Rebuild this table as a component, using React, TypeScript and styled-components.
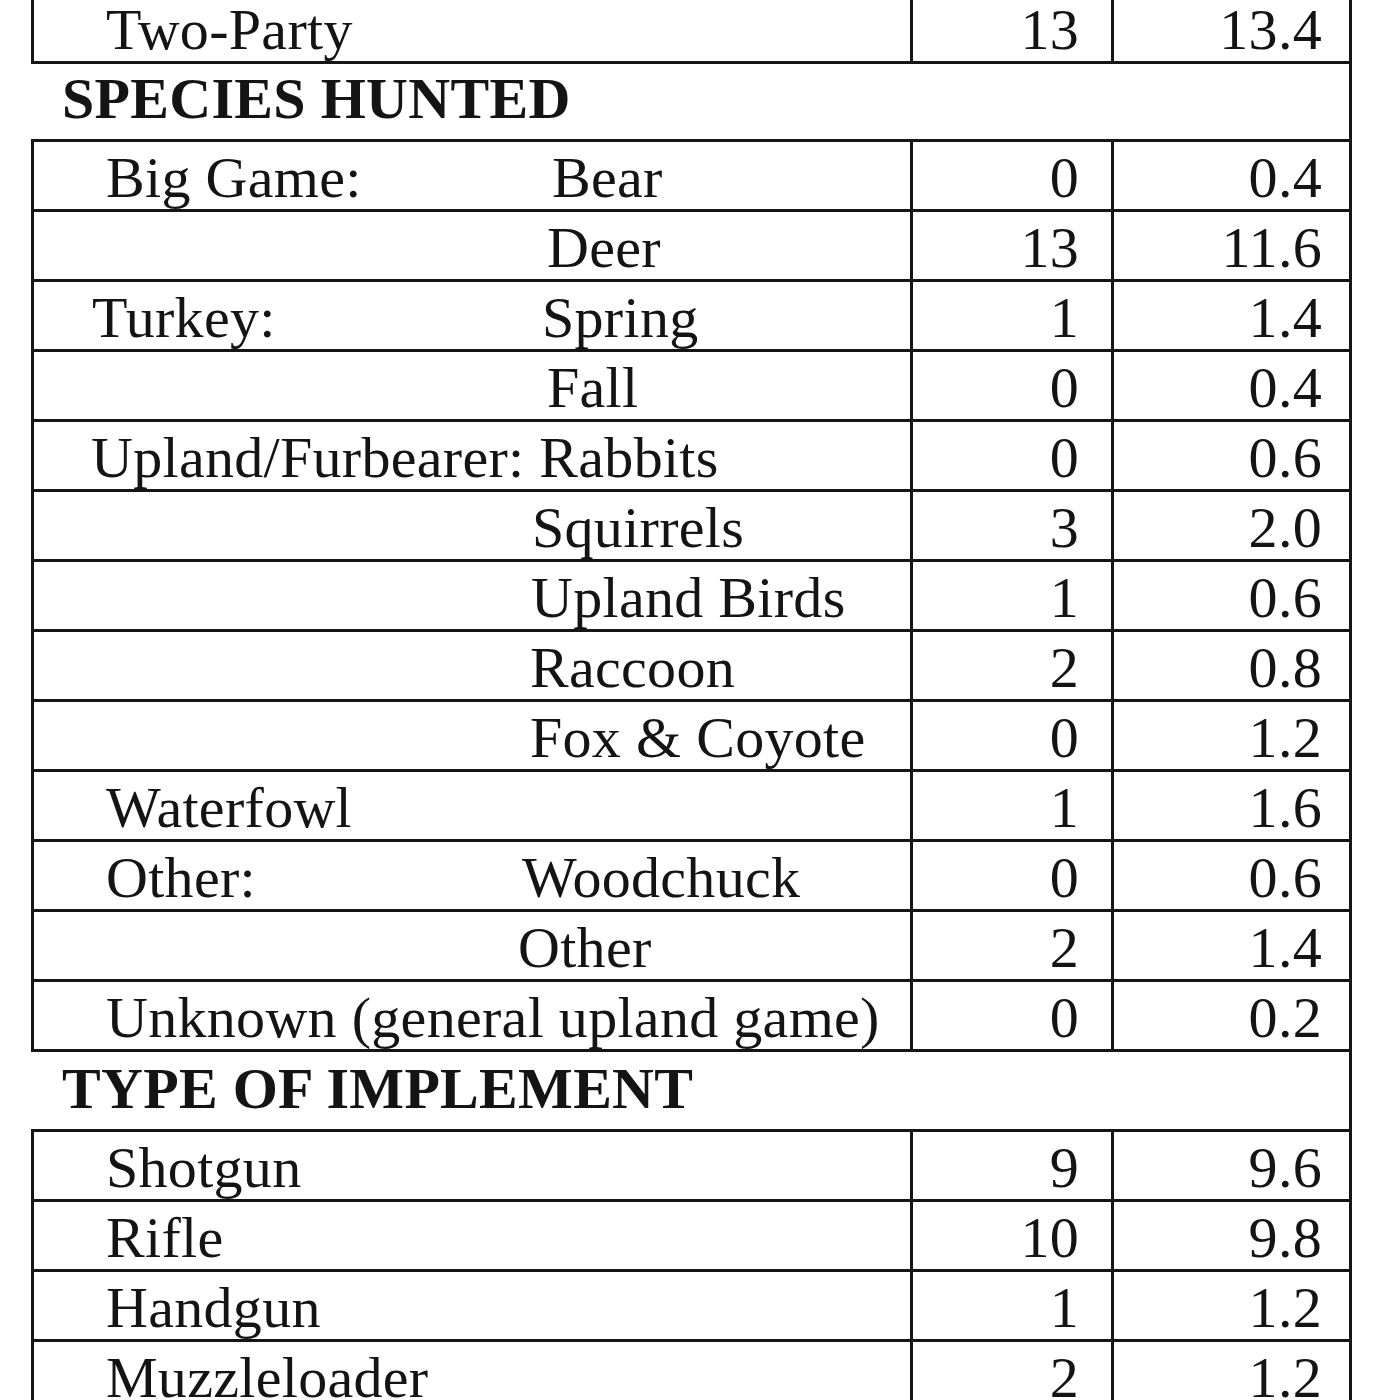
import styled, { createGlobalStyle } from 'styled-components'

const GlobalStyle = createGlobalStyle`
  html, body {
    margin: 0;
    padding: 0;
    background: #ffffff;
  }
  body {
    font-family: "Liberation Serif", "Times New Roman", serif;
    color: #141414;
    overflow: hidden;
  }
`

type Entry = {
  label?: string
  indent?: number
  sub?: string
  subAt?: number
  count: string
  avg: string
}

type Section = {
  title?: string
  rows: Entry[]
}

const sections: Section[] = [
  {
    rows: [{ label: 'Two-Party', count: '13', avg: '13.4' }],
  },
  {
    title: 'SPECIES HUNTED',
    rows: [
      { label: 'Big Game:', sub: 'Bear', subAt: 518, count: '0', avg: '0.4' },
      { sub: 'Deer', subAt: 513, count: '13', avg: '11.6' },
      { label: 'Turkey:', indent: 58, sub: 'Spring', subAt: 508, count: '1', avg: '1.4' },
      { sub: 'Fall', subAt: 513, count: '0', avg: '0.4' },
      { label: 'Upland/Furbearer: Rabbits', indent: 57, count: '0', avg: '0.6' },
      { sub: 'Squirrels', subAt: 498, count: '3', avg: '2.0' },
      { sub: 'Upland Birds', subAt: 497, count: '1', avg: '0.6' },
      { sub: 'Raccoon', subAt: 496, count: '2', avg: '0.8' },
      { sub: 'Fox & Coyote', subAt: 496, count: '0', avg: '1.2' },
      { label: 'Waterfowl', count: '1', avg: '1.6' },
      { label: 'Other:', sub: 'Woodchuck', subAt: 488, count: '0', avg: '0.6' },
      { sub: 'Other', subAt: 484, count: '2', avg: '1.4' },
      { label: 'Unknown (general upland game)', count: '0', avg: '0.2' },
    ],
  },
  {
    title: 'TYPE OF IMPLEMENT',
    rows: [
      { label: 'Shotgun', count: '9', avg: '9.6' },
      { label: 'Rifle', count: '10', avg: '9.8' },
      { label: 'Handgun', count: '1', avg: '1.2' },
      { label: 'Muzzleloader', count: '2', avg: '1.2' },
    ],
  },
]

function App() {
  return (
    <>
      <GlobalStyle />
      <Page>
        <Sheet>
          {sections.map((section, i) => (
            <div key={i}>
              {section.title && <Heading $tall={i > 1}>{section.title}</Heading>}
              <Block $first={i === 0}>
                {section.rows.map((row, j) => (
                  <Row key={j}>
                    <NameCell $indent={row.indent ?? 72}>
                      {row.label && <Label>{row.label}</Label>}
                      {row.sub && <Sub $at={row.subAt ?? 0}>{row.sub}</Sub>}
                    </NameCell>
                    <CountCell>{row.count}</CountCell>
                    <AvgCell>{row.avg}</AvgCell>
                  </Row>
                ))}
              </Block>
            </div>
          ))}
        </Sheet>
      </Page>
    </>
  )
}

export default App

const Page = styled.div`
  width: 1400px;
  height: 1400px;
  overflow: hidden;
`

const Sheet = styled.div`
  margin: -6px 0 0 31px;
  width: 1321px;
  border-right: 3px solid #151515;
  box-sizing: border-box;
`

const Heading = styled.div<{ $tall?: boolean }>`
  height: ${p => (p.$tall ? 77 : 75)}px;
  box-sizing: border-box;
  padding: ${p => (p.$tall ? 8 : 6)}px 0 0 31px;
  font-size: 58px;
  line-height: 58px;
  font-weight: 700;
  letter-spacing: 0.3px;
  white-space: nowrap;
`

const Block = styled.div<{ $first?: boolean }>`
  border-left: 3px solid #151515;
  border-top: ${p => (p.$first ? 'none' : '3px solid #151515')};
`

const Row = styled.div`
  display: flex;
  height: 70px;
  box-sizing: border-box;
  border-bottom: 3px solid #151515;
  font-size: 58px;
  line-height: 58px;
  letter-spacing: 0.3px;
  white-space: nowrap;
`

const NameCell = styled.div<{ $indent: number }>`
  position: relative;
  width: 879px;
  flex: none;
  box-sizing: border-box;
  border-right: 3px solid #151515;
  padding: 7px 0 0 ${p => p.$indent}px;
`

const Label = styled.span`
  display: inline-block;
`

const Sub = styled.span<{ $at: number }>`
  position: absolute;
  top: 7px;
  left: ${p => p.$at}px;
`

const CountCell = styled.div`
  width: 201px;
  flex: none;
  box-sizing: border-box;
  border-right: 3px solid #151515;
  padding: 7px 32px 0 0;
  text-align: right;
`

const AvgCell = styled.div`
  flex: 1;
  box-sizing: border-box;
  padding: 7px 27px 0 0;
  text-align: right;
`
